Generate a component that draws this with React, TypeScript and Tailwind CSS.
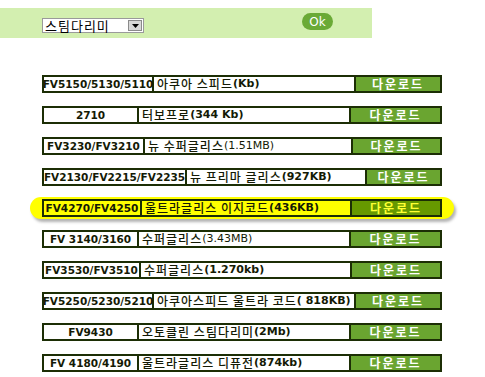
import React from "react";

type Row = { model: string; name: string; size: string; c1: string; c3: string; sizeBold?: boolean; hl?: boolean };

const rows: Row[] = [
  { model: "FV5150/5130/5110", name: "아쿠아 스피드", size: " (Kb)", c1: "w-[110px]", c3: "w-[86px]", sizeBold: true },
  { model: "2710", name: "터보프로", size: "(344 Kb)", c1: "w-[95px]", c3: "w-[91px]", sizeBold: true },
  { model: "FV3230/FV3210", name: "뉴 수퍼글리스", size: " (1.51MB)", c1: "w-[101px]", c3: "w-[89px]", sizeBold: false },
  { model: "FV2130/FV2215/FV2235", name: "뉴 프리마 글리스", size: "(927KB)", c1: "w-[143px]", c3: "w-[75px]", sizeBold: true },
  { model: "FV4270/FV4250", name: "울트라글리스 이지코드", size: "(436KB)", c1: "w-[98px]", c3: "w-[90px]", sizeBold: true, hl: true },
  { model: "FV 3140/3160", name: "수퍼글리스", size: "(3.43MB)", c1: "w-[95px]", c3: "w-[91px]", sizeBold: false },
  { model: "FV3530/FV3510", name: "수퍼글리스", size: "(1.270kb)", c1: "w-[97px]", c3: "w-[90px]", sizeBold: true },
  { model: "FV5250/5230/5210", name: "아쿠아스피드 울트라 코드", size: "( 818KB)", c1: "w-[110px]", c3: "w-[86px]", sizeBold: true },
  { model: "FV9430", name: "오토클린 스팀다리미", size: "(2Mb)", c1: "w-[95px]", c3: "w-[91px]", sizeBold: true },
  { model: "FV 4180/4190", name: "울트라글리스 디퓨전", size: "(874kb)", c1: "w-[95px]", c3: "w-[91px]", sizeBold: true },
];

const latin = { fontFamily: '"DejaVu Sans", "Noto Sans CJK KR", sans-serif' };
const kor = { fontFamily: '"Noto Sans CJK KR", sans-serif' };

function TableRow({ r }: { r: Row }) {
  const table = (
    <div className={`flex w-[400px] h-[18px] border-2 border-[#1c2e05] ${r.hl ? "bg-[#ffff00]" : "bg-white"}`}>
      <div
        className={`${r.c1} shrink-0 border-r-2 border-[#1c2e05] flex items-center justify-center whitespace-nowrap text-[10.5px] font-bold text-[#141a05] leading-[14px]`}
        style={latin}
      >
        {r.model}
      </div>
      <div className="flex-1 flex items-center pl-[3px] whitespace-nowrap text-[#141a05] leading-[14px] min-w-0">
        <span className="text-[12px] font-medium tracking-[1px]" style={kor}>{r.name}</span>
        <span className={`text-[11px] ${r.sizeBold ? "font-bold" : "font-normal"}`} style={latin}>{r.size}</span>
      </div>
      <div
        className={`${r.c3} shrink-0 border-l-2 border-[#1c2e05] flex justify-center text-[12px] font-bold tracking-[2px] leading-[13px] ${r.hl ? "bg-[#669900] text-[#ffff33]" : "bg-[#6aa530] text-white"}`}
        style={kor}
      >
        다운로드
      </div>
    </div>
  );
  if (r.hl) {
    return (
      <div className="-my-[2px] ml-[30px] w-[424px] px-[12px] py-[2px] rounded-full bg-[#ffff00] shadow-[2px_3px_3px_rgba(0,0,0,0.3)]">
        {table}
      </div>
    );
  }
  return <div className="ml-[42px]">{table}</div>;
}

export default function App() {
  return (
    <div className="w-[485px] h-[377px] bg-white pt-[8px] overflow-hidden">
      <div className="w-[372px] h-[30px] bg-[#d3efb0] flex items-start">
        <div className="ml-[42px] mt-[10px] w-[102px] h-[15px] border border-[#9a9a9a] bg-white flex items-center">
          <span className="pl-[2px] flex-1 text-[13px] tracking-[1px] text-black leading-[13px]" style={kor}>스팀다리미</span>
          <div className="w-[14px] h-[11px] mr-[1px] bg-[#d8d8d8] border border-[#8a8a8a] flex items-center justify-center">
            <svg width="7" height="4" viewBox="0 0 7 4"><path d="M0 0h7L3.5 4z" fill="#000" /></svg>
          </div>
        </div>
        <div
          className="ml-[158px] mt-[5px] w-[31px] h-[17px] rounded-full bg-[#6aaa36] text-white text-[12px] flex items-center justify-center leading-none"
          style={{ fontFamily: '"DejaVu Sans", sans-serif' }}
        >
          Ok
        </div>
      </div>
      <div className="mt-[37px] flex flex-col gap-[13px]">
        {rows.map((r, i) => (
          <TableRow key={i} r={r} />
        ))}
      </div>
    </div>
  );
}
